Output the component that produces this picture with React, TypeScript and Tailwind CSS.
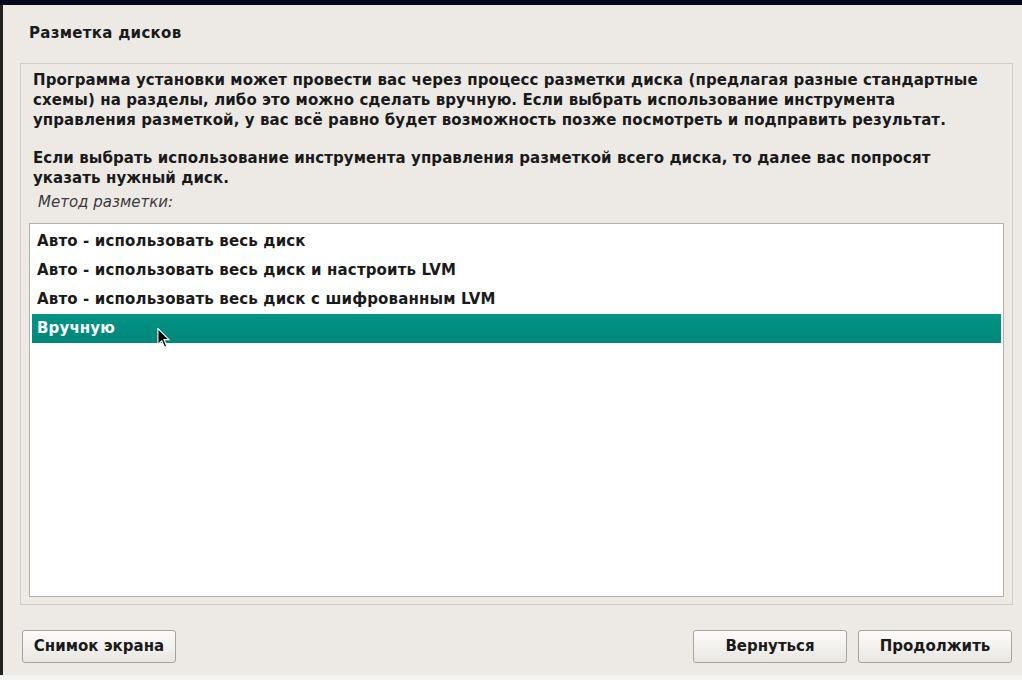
const font = { fontFamily: '"DejaVu Sans", "Noto Sans", sans-serif' };

const methods = [
  "Авто - использовать весь диск",
  "Авто - использовать весь диск и настроить LVM",
  "Авто - использовать весь диск с шифрованным LVM",
  "Вручную",
];

function Btn({ label, className }: { label: string; className?: string }) {
  return (
    <button
      className={`h-[33px] w-[154px] rounded-[3px] border border-[#a9a39b] bg-gradient-to-b from-[#fdfcfb] to-[#e9e6e1] text-[15px] font-bold text-[#1a1a1a] shadow-[inset_0_1px_0_#ffffff] ${className ?? ""}`}
    >
      {label}
    </button>
  );
}

function Cursor() {
  return (
    <svg width="14" height="21" viewBox="0 0 12 19" className="absolute left-[157px] top-[328px]">
      <path d="M0.5 0.5 L0.5 15 L4 11.5 L6.5 17.5 L8.5 16.5 L6 10.5 L10.5 10.5 Z" fill="#000" stroke="#fff" strokeWidth="1" />
    </svg>
  );
}

export default function App() {
  const selected = 3;
  return (
    <div className="relative h-[680px] w-[1022px] overflow-hidden bg-[#f3f3f3]" style={font}>
      <div className="h-[5px] bg-[#05081a]" />
      <div className="flex h-[670px] flex-col border-l-[3px] border-[#222] bg-[#edeae6]">
        <div className="flex h-[58px] items-center pb-[2px] pl-[26px] text-[15px] font-bold tracking-[0.3px] text-[#1a1a1a]">
          Разметка дисков
        </div>
        <div className="ml-[17px] flex h-[542px] w-[993px] flex-col border border-[#d3cdc5] px-[8px] pb-[7px] pt-[6px]">
          <div className="whitespace-nowrap pl-[4px] text-[15px] font-bold leading-[20px] tracking-[0.08px] text-[#1a1a1a]">
            <p>
              Программа установки может провести вас через процесс разметки диска (предлагая разные стандартные
              <br />
              схемы) на разделы, либо это можно сделать вручную. Если выбрать использование инструмента
              <br />
              управления разметкой, у вас всё равно будет возможность позже посмотреть и подправить результат.
            </p>
            <p className="mt-[18px]">
              Если выбрать использование инструмента управления разметкой всего диска, то далее вас попросят
              <br />
              указать нужный диск.
            </p>
          </div>
          <div className="mt-[4px] pl-[9px] text-[15px] italic leading-[20px] text-[#3a3a3a]">Метод разметки:</div>
          <div className="mt-[11px] flex-1 border border-[#b9b1a6] bg-white px-[2px] pt-[3px]">
            {methods.map((m, i) => (
              <div
                key={m}
                className={`flex h-[29px] items-center pl-[5px] text-[15px] font-bold tracking-[0.15px] ${
                  i === selected ? "bg-gradient-to-b from-[#009484] to-[#00877a] text-white" : "text-[#1a1a1a]"
                }`}
              >
                {m}
              </div>
            ))}
          </div>
        </div>
        <div className="flex flex-1 items-center pl-[19px] pr-[10px] pt-[12px]">
          <Btn label="Снимок экрана" />
          <div className="flex-1" />
          <Btn label="Вернуться" />
          <Btn label="Продолжить" className="ml-[11px]" />
        </div>
      </div>
      <Cursor />
    </div>
  );
}
